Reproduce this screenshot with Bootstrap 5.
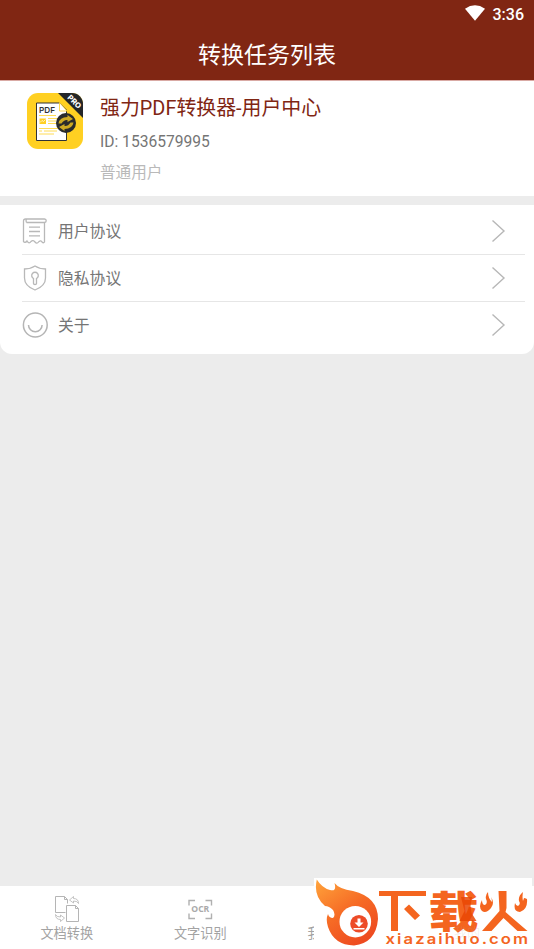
<!DOCTYPE html>
<html lang="zh-CN">
<head>
    <meta charset="UTF-8">
    <meta name="viewport" content="width=device-width, initial-scale=1">
    <title>转换任务列表</title>
    <link rel="stylesheet" href="https://cdn.jsdelivr.net/npm/bootstrap@5.3.3/dist/css/bootstrap.min.css">
    <style>
        body {
            height: 949px;
            background: #ececec;
            color: #757575;
            font-family: Roboto, "Noto Sans CJK SC", sans-serif;
            font-size: 16px;
            line-height: 24px;
        }
        svg { display: block; flex: none; }
        .app-header { height: 80px; background: #802613; }
        .status-bar { height: 30px; padding: 0 10px 1px 0; font-size: 16px; font-weight: 500; }
        .status-bar svg { margin-bottom: 4px; }
        .page-title { font-size: 23px; line-height: 34px; padding-top: 9px; }
        .profile { height: 116px; padding: 12px 27px 0; border-top: 1px solid #d9aaa4; }
        .profile-text { margin-left: 17px; }
        .profile-name { color: #802613; font-size: 19.9px; line-height: 28px; padding-top: 2px; }
        .profile-id { font-size: 15.6px; line-height: 20px; margin-top: 9px; }
        .profile-level { color: #b9b9b9; font-size: 15.6px; line-height: 24px; margin-top: 9px; }
        .menu-panel { height: 149px; margin-top: 9px; padding: 3px 9px 0 22px; border-radius: 0 0 12px 12px; }
        .menu-row { height: 47px; border-bottom: 1px solid #e6e6e6; font-size: 15.8px; }
        .menu-row:last-child { border-bottom: 0; height: 45px; }
        .menu-label { margin-left: 10px; padding-top: 2px; }
        .menu-arrow { margin-right: 19px; }
        .tab-bar { height: 63px; padding-top: 8px; color: #a3a3a3; font-size: 13.2px; line-height: 20px; }
        .tab-bar svg { margin-bottom: 2px; }
        .site-logo { right: 1px; bottom: 0; }
    </style>
</head>
<body class="d-flex flex-column position-relative overflow-hidden">
    <header class="app-header text-white">
        <div class="status-bar d-flex justify-content-end align-items-center">
            <svg class="me-2" width="20" height="16" viewBox="0 0 20 16"><path d="M0 3.7Q10-3.2 20 3.7L10 15.8Z" fill="#fff"/></svg>
            <span>3:36</span>
        </div>
        <div class="page-title text-center">转换任务列表</div>
    </header>

    <section class="profile bg-white d-flex">
        <svg width="56" height="56" viewBox="0 0 56 56">
            <defs><clipPath id="iconShape"><rect width="56" height="56" rx="11"/></clipPath></defs>
            <g clip-path="url(#iconShape)">
                <rect width="56" height="56" fill="#ffd022"/>
                <path d="M31 0h25v25Z" fill="#242628"/>
            </g>
            <path d="M9.5 10H33l6.500 7v30.500H9.500Z" fill="#fff" stroke="#303236"/>
            <path d="M32.500 9.500v8.500h7.500Z" fill="#fff" stroke="#ffd022" stroke-width=".8"/>
            <text x="12" y="20" font-size="8" font-weight="600" font-family="Inter" fill="#303236" textLength="16" lengthAdjust="spacingAndGlyphs">PDF</text>
            <path d="M12 22.500h17M21 25.500h10M21 28h8M21 30.500h9M12 35.500h19M12 38h3M17 38h13M12 41h15" stroke="#ffdc55"/>
            <path d="M12.500 25.500h6.500v5.500h-6.500Z" fill="#ffd022"/><path d="M13 29.500l2-2 1.500 1 2-2" stroke="#fff" fill="none" stroke-width=".7"/>
            <circle cx="39" cy="30" r="10" fill="#292a2b"/>
            <path d="M31.500 30.500q1-6.500 9-6.500v-2l5.500 4-5.500 3v-2q-3.500-.5-6 3.500Z" fill="#cda923"/>
            <path d="M46.500 29.500q-1 6.500-9 6.500v2l-5.500-4 5.500-3v2q3.500.5 6-3.500Z" fill="#cda923"/>
            <text x="47.300" y="8.800" transform="rotate(45 47.300 8.800)" text-anchor="middle" dominant-baseline="central" fill="#fff" font-size="7.500" font-weight="800" font-family="Inter">PRO</text>
        </svg>
        <div class="profile-text">
            <div class="profile-name">强力PDF转换器-用户中心</div>
            <div class="profile-id">ID: 1536579995</div>
            <div class="profile-level">普通用户</div>
        </div>
    </section>

    <section class="menu-panel bg-white">
        <div class="menu-row d-flex align-items-center">
            <svg width="26" height="26" viewBox="0 0 26 26" fill="none" stroke="#b8b8b8" stroke-width="1.300">
                <path d="M4.500 4.500H22.500q1.700 0 1.700-1.700T22.500 1H3.500Q1.500 1 1.500 3v20.500q1.500 2 3.500-.5 2 3.500 4 .5 2-2 4 .5 2 2.500 4-.5 2-1.500 3 .5 1.500 1.500 2.500 0v-19M4.500 4.500q-1-1.800 0-3.300"/>
                <path d="M7 9.200h11M7 13.500h11M7 17.800h11"/>
            </svg>
            <span class="menu-label">用户协议</span>
            <svg class="menu-arrow ms-auto" width="15" height="24" viewBox="0 0 15 24"><path d="M1.500 1.500L13 12 1.500 22.500" fill="none" stroke="#b7b7b7" stroke-width="1.400"/></svg>
        </div>
        <div class="menu-row d-flex align-items-center">
            <svg width="26" height="26" viewBox="0 0 26 26" fill="none" stroke="#b8b8b8" stroke-width="1.300">
                <path d="M13 1Q9 3.800 2.500 4v9q0 8 10.500 12 10.500-4 10.500-12V4Q17 3.800 13 1Z"/>
                <path d="M11.500 13.500a3.300 3.300 0 1 1 3 0v5q0 1-1.500 1t-1.500-1Z"/>
            </svg>
            <span class="menu-label">隐私协议</span>
            <svg class="menu-arrow ms-auto" width="15" height="24" viewBox="0 0 15 24"><path d="M1.500 1.500L13 12 1.500 22.500" fill="none" stroke="#b7b7b7" stroke-width="1.400"/></svg>
        </div>
        <div class="menu-row d-flex align-items-center">
            <svg width="26" height="26" viewBox="0 0 26 26" fill="none" stroke="#b5b5b5" stroke-width="1.500">
                <circle cx="13.300" cy="13" r="11.900"/><path d="M6.500 13a6.800 6.800 0 0 0 13.600 0"/>
            </svg>
            <span class="menu-label">关于</span>
            <svg class="menu-arrow ms-auto" width="15" height="24" viewBox="0 0 15 24"><path d="M1.500 1.500L13 12 1.500 22.500" fill="none" stroke="#b7b7b7" stroke-width="1.400"/></svg>
        </div>
    </section>

    <nav class="tab-bar bg-white d-flex mt-auto">
        <div class="col-3 d-flex flex-column align-items-center">
            <svg width="26" height="28" viewBox="0 0 26 28" fill="none" stroke="#b5b5b5">
                <path d="M1.500 18.500v-16h9l3 3v4M1.500 18.500h10M10.500 2.500v3h3M12.500 11.500h9l3 3v13h-12ZM21.500 11.500v3h3"/>
                <path d="M24.500 9.500q0-5-5-5v-2l-4 3.500 4 3v-2q4 0 5 2.500ZM1.500 20.500q0 5 5 5v2l4-3.500-4-3v2q-4 0-5-2.500Z" stroke-width=".8"/>
            </svg>
            <span>文档转换</span>
        </div>
        <div class="col-3 d-flex flex-column align-items-center">
            <svg width="26" height="28" viewBox="0 0 26 28">
                <path d="M2 11.500V6.500h6M18.500 6.500h6v5M2 19.500v5h6M18.500 24.500h6v-5" fill="none" stroke="#b0b0b0" stroke-width="1.400"/>
                <text x="13.300" y="18.300" text-anchor="middle" font-family="Open Sans" font-weight="700" font-size="8.500" fill="#aaa" textLength="18" lengthAdjust="spacingAndGlyphs">OCR</text>
            </svg>
            <span>文字识别</span>
        </div>
        <div class="col-3 d-flex flex-column align-items-center">
            <svg width="26" height="28" viewBox="0 0 26 28"><path d="M3 7h8v7H3ZM15 7h8v7h-8ZM3 17h8v7H3Z" fill="#bbb"/></svg>
            <span>我的任务</span>
        </div>
    </nav>

    <svg class="site-logo position-absolute" width="219" height="71" viewBox="314 878 219 71">
        <defs>
            <linearGradient id="flame" x1="0" y1="0" x2=".65" y2="1">
                <stop offset="0" stop-color="#ffa43b"/><stop offset=".55" stop-color="#f66b25"/><stop offset="1" stop-color="#ee4b20"/>
            </linearGradient>
        </defs>
        <path d="M314 878h218v71H314Z" fill="#fff"/>
        <path d="M316.800 879.500Q322 888 330 890Q337 892 334.500 883Q339 889 353 891Q378 897 378 919Q376 943 354 945.500Q334 945 328 927Q325.500 919 328 914Q329 918 333 918Q336 915 333 910Q329 906 325 906Q313 896 316.800 879.500Z" fill="url(#flame)"/>
        <circle cx="355.300" cy="921.700" r="15.800" fill="#fff"/>
        <circle cx="359" cy="923.700" r="8.800" fill="#ed4b27"/>
        <path d="M357.500 918.500h3v4h3l-4.500 4.500-4.500-4.500h3ZM353.500 928h11v1.500h-11Z" fill="#fff"/>
        <path d="M379 891h47v5h-28v35h-7v-35h-12ZM409 904.500l11 11-5 4.500-11-11Z" fill="#f4651f"/>
        <text x="428.500" y="927.500" font-family="Noto Sans CJK SC" font-size="43" font-weight="900" fill="#f4651f" textLength="50" lengthAdjust="spacingAndGlyphs">载</text>
        <path d="M461 897h11l-1.500 9 1 7 5 8h-17l5-10Z" fill="#e94705" fill-opacity=".85"/>
        <path d="M498.500 891h8v17l-1 4 22 19h-10l-14-13-12 13h-9.500l17.500-20Z" fill="#f4651f"/>
        <path d="M488 892q0 6 4 10 0-3-1-5 4 6 0 11-5 6-9 3-4-4 0-11 0 5 3 5 3-2 1-6-1-4 2-7ZM523 892q-1 5 0 9l1-3q1 0 3 1 1 10-7 13-7 0-5-9 1 3 3 3 3-2 1-5-1-5 4-9Z" fill="#f4651f"/>
        <g transform="translate(385.500 943.700) scale(1.150 1)">
            <text font-family="Inter" font-size="14.500" font-weight="600" fill="#f4651f" textLength="124" lengthAdjust="spacing">xiazaihuo.com</text>
        </g>
        <text x="454" y="937" font-size="13" fill="#b8a29a" fill-opacity=".18">我的</text>
    </svg>

    <script src="https://cdn.jsdelivr.net/npm/bootstrap@5.3.3/dist/js/bootstrap.bundle.min.js"></script>
</body>
</html>
